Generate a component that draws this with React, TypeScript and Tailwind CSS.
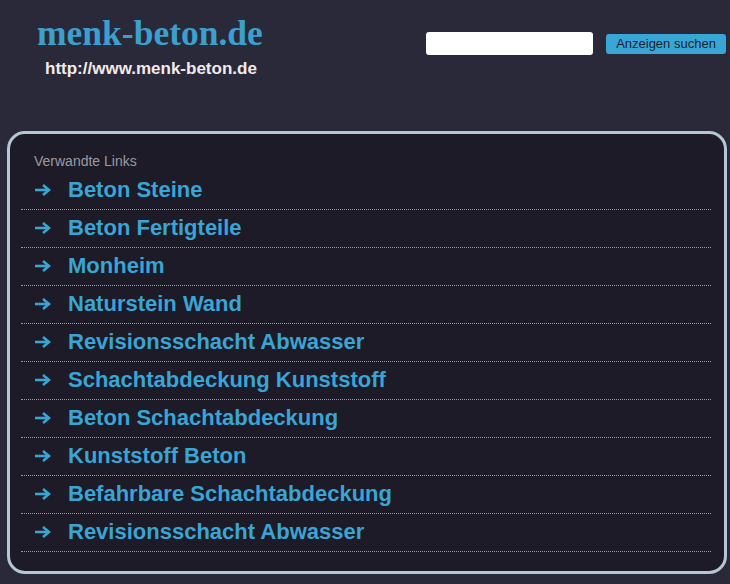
const links = [
  "Beton Steine",
  "Beton Fertigteile",
  "Monheim",
  "Naturstein Wand",
  "Revisionsschacht Abwasser",
  "Schachtabdeckung Kunststoff",
  "Beton Schachtabdeckung",
  "Kunststoff Beton",
  "Befahrbare Schachtabdeckung",
  "Revisionsschacht Abwasser",
];

function Arrow() {
  return (
    <svg width="17" height="14" viewBox="0 0 17 14" className="shrink-0">
      <path d="M1 7h12" stroke="#3aa4d4" strokeWidth="2.6" strokeLinecap="butt" />
      <path d="M9 2l6 5-6 5" fill="none" stroke="#3aa4d4" strokeWidth="2.6" strokeLinejoin="miter" />
    </svg>
  );
}

export default function App() {
  return (
    <div className="min-h-[584px] w-[730px] bg-[#2a2939] font-['Liberation_Sans',Arial,sans-serif] overflow-hidden">
      <div className="flex h-[131px] items-start justify-between">
        <div className="pl-[37px] pt-[13px]">
          <h1 className="font-['Liberation_Serif',serif] text-[35.5px] font-bold leading-[40px] text-[#3ba0cd]">
            menk-beton.de
          </h1>
          <p className="pl-[8px] pt-[6px] text-[17px] font-bold leading-[20px] text-[#f3e9ea]">
            http://www.menk-beton.de
          </p>
        </div>
        <div className="flex items-center gap-[13px] pr-[4px] pt-[32px]">
          <input className="h-[23px] w-[167px] rounded-[3px] bg-white outline-none" />
          <button className="h-[20px] w-[120px] rounded-[3px] bg-[#3aa6d6] text-[13px] leading-[20px] text-[#1e2230]">
            Anzeigen suchen
          </button>
        </div>
      </div>
      <div className="mx-[7px] h-[443px] w-[720px] rounded-[18px] border-[3px] border-[#b4c7d4] bg-[#1c1b27] pl-[11px] pr-[13px] pt-[19px]">
        <p className="pl-[13px] text-[14px] leading-[17px] text-[#9a9aa2]">Verwandte Links</p>
        <ul className="mt-[2px]">
          {links.map((l, i) => (
            <li
              key={i}
              className="flex h-[38px] items-center gap-[17px] border-b border-dotted border-[#9a9aa6] pb-[2px] pl-[13px]"
            >
              <Arrow />
              <span className="text-[22px] font-bold leading-[26px] text-[#3aa4d4]">{l}</span>
            </li>
          ))}
        </ul>
      </div>
    </div>
  );
}
